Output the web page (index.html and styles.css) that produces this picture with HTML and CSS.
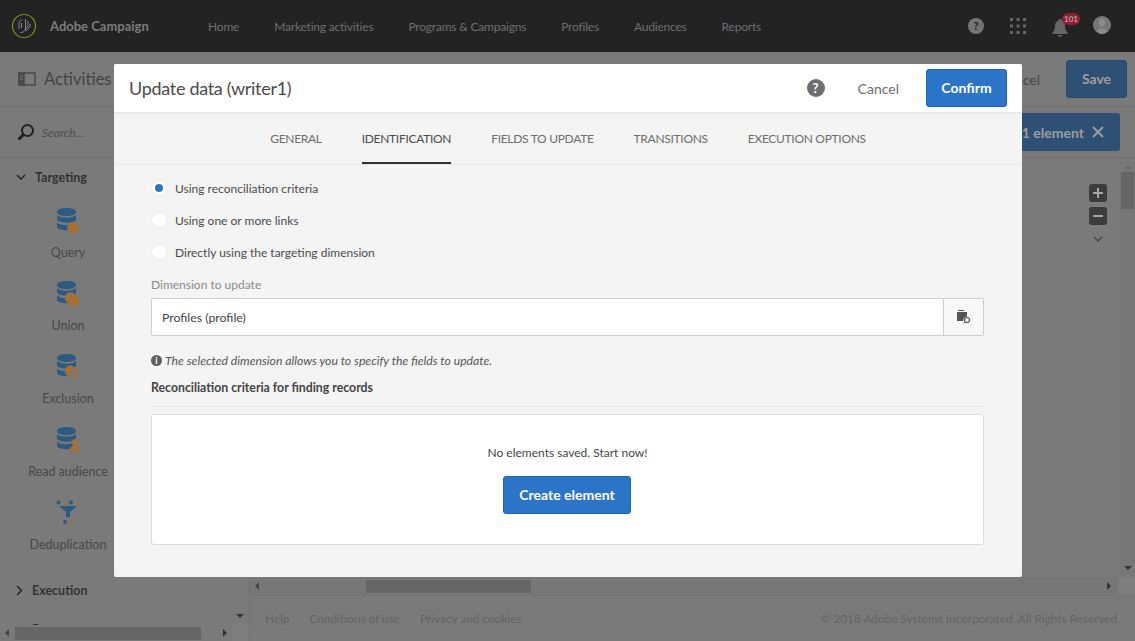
FILE: index.html
```html
<!DOCTYPE html>
<html lang="en">

<head>
    <meta charset="UTF-8">
    <title>Adobe Campaign</title>
    <link rel="stylesheet" href="styles.css">
</head>

<body>
    <!-- Top navigation -->
    <header class="topbar">
        <svg class="logo" width="26" height="26" viewBox="0 0 26 26" fill="none">
            <circle cx="13" cy="13" r="11.500" stroke="#7c8a2a" stroke-width="1.200" />
            <path d="M8 16V10c0-1.500 1-3 3-3M10.500 15v-5M14.500 6v10c0 2-2 3.500-5 3.500M17 8v5l-3 3.500M19 11v2.500l-4 4.500" stroke="#8a8a8a" stroke-width="1" />
        </svg>
        <span class="brand">Adobe Campaign</span>
        <nav class="topnav">
            <a>Home</a>
            <a>Marketing activities</a>
            <a>Programs &amp; Campaigns</a>
            <a>Profiles</a>
            <a>Audiences</a>
            <a>Reports</a>
        </nav>
        <div class="topicons">
            <span class="help-dim">?</span>
            <svg width="16" height="16" viewBox="0 0 16 16" fill="#666">
                <rect x="0" y="0" width="3" height="3" /><rect x="6.500" y="0" width="3" height="3" /><rect x="13" y="0" width="3" height="3" />
                <rect x="0" y="6.500" width="3" height="3" /><rect x="6.500" y="6.500" width="3" height="3" /><rect x="13" y="6.500" width="3" height="3" />
                <rect x="0" y="13" width="3" height="3" /><rect x="6.500" y="13" width="3" height="3" /><rect x="13" y="13" width="3" height="3" />
            </svg>
            <div class="bell">
                <svg width="16" height="18" viewBox="0 0 16 18" fill="#666">
                    <path d="M8 0c1 0 1.500.6 1.500 1.500C12 2.300 13 4.500 13 7c0 3.500 1 5 2.500 6.500V15H.5v-1.500C2 12 3 10.500 3 7c0-2.500 1-4.700 3.500-5.500C6.500.6 7 0 8 0zM6 16h4c0 1.200-1 2-2 2s-2-.8-2-2z" />
                </svg>
                <span class="badge">101</span>
            </div>
            <svg class="avatar" width="18" height="18" viewBox="0 0 18 18">
                <circle cx="9" cy="9" r="9" fill="#777" />
                <path d="M9 3c2 0 3 1.500 3 3.500S10.500 11 9 11 6 8.500 6 6.500 7 3 9 3zM4 16c.5-3 3-3.500 5-3.500s4.500.5 5 3.500c-1.500 1.300-3 2-5 2s-3.500-.7-5-2z" fill="#8c8c8c" />
            </svg>
        </div>
    </header>

    <!-- Activities toolbar, mostly behind the dialog -->
    <div class="toolbar">
        <svg width="18" height="14" viewBox="0 0 18 14" fill="none" stroke="#4a4a4a" stroke-width="1.500">
            <rect x="1" y="1" width="16" height="12" />
            <rect x="1" y="1" width="5" height="12" fill="#4a4a4a" />
            <path d="M2 4h3M2 7h3" stroke="#7a7a7a" stroke-width="1" />
        </svg>
        <span class="toolbar-title">Activities</span>
        <span class="toolbar-cancel">Cancel</span>
        <button class="btn-save">Save</button>
    </div>

    <div class="workspace">
        <!-- Activity palette -->
        <aside class="sidebar">
            <div class="search">
                <svg width="18" height="18" viewBox="0 0 18 18" fill="none" stroke="#222" stroke-width="2">
                    <circle cx="10.500" cy="7.500" r="5.500" />
                    <path d="M6.500 11.500L1.500 16.500" stroke-width="3" />
                </svg>
                <span>Search...</span>
            </div>
            <div class="palette">
                <div class="group-title">
                    <svg width="10" height="7" viewBox="0 0 10 7" fill="none" stroke="#2c2c2c" stroke-width="1.600"><path d="M1 1l4 4 4-4" /></svg>
                    Targeting
                </div>
                <div class="activity">
                    <svg width="24" height="26" viewBox="0 0 24 26">
                        <defs>
                            <path id="db-shape" d="M1 4c0-5.300 19-5.300 19 0s-19 5.300-19 0zM1 7c3 3.500 16 3.500 19 0v5c-3 3.500-16 3.500-19 0zM1 14.500c3 3.500 16 3.500 19 0v5c-3 3.500-16 3.500-19 0z" />
                        </defs>
                        <use class="db" href="#db-shape" />
                        <circle class="or" cx="17" cy="20" r="5.500" />
                    </svg>
                    <span>Query</span>
                </div>
                <div class="activity">
                    <svg width="24" height="26" viewBox="0 0 24 26">
                        <use class="db" href="#db-shape" />
                        <circle class="or" cx="14.500" cy="17" r="5.500" />
                        <circle class="or" cx="18" cy="20" r="5.500" />
                    </svg>
                    <span>Union</span>
                </div>
                <div class="activity">
                    <svg width="24" height="26" viewBox="0 0 24 26">
                        <use class="db" href="#db-shape" />
                        <circle class="or" cx="14.500" cy="17" r="5.500" />
                        <circle cx="18" cy="20" r="4.300" fill="#7a7a7a" stroke="#a86f2f" stroke-width="1.200" />
                    </svg>
                    <span>Exclusion</span>
                </div>
                <div class="activity">
                    <svg width="24" height="26" viewBox="0 0 24 26">
                        <use class="db" href="#db-shape" />
                        <path class="or" d="M19 12c2 0 3 1.500 3 3s-1 2.500-1.500 3.500c1 1 3.500 1 3.500 3.500v2H14v-2c0-2.500 2.500-2.500 3.500-3.500-.5-1-1.500-2-1.500-3.500s1-3 3-3z" />
                    </svg>
                    <span>Read audience</span>
                </div>
                <div class="activity">
                    <svg width="26" height="26" viewBox="0 0 26 26">
                        <circle class="db" cx="3.500" cy="2.500" r="2" />
                        <path class="or" d="M9.500 .5l2 4h-4z" />
                        <circle class="db" cx="16" cy="2.500" r="2" />
                        <path class="or" d="M23 .5l2 4h-4z" />
                        <path class="db" d="M4 6h18l-7 6v5h-4v-5z" />
                        <circle class="db" cx="10" cy="22" r="2" />
                        <path class="or" d="M16 20l2 4h-4z" />
                    </svg>
                    <span>Deduplication</span>
                </div>
                <div class="group-title group-closed">
                    <svg width="7" height="11" viewBox="0 0 7 11" fill="none" stroke="#2c2c2c" stroke-width="1.600"><path d="M1 1l4.500 4.500L1 10" /></svg>
                    Execution
                </div>
                <div class="group-title group-cut">
                    <svg width="7" height="11" viewBox="0 0 7 11" fill="none" stroke="#2c2c2c" stroke-width="1.600"><path d="M1 1l4.500 4.500L1 10" /></svg>
                    Data management
                </div>
                <span class="arrow-down sidebar-down"></span>
            </div>
            <div class="hscroll sidebar-scroll">
                <span class="arrow-left"></span>
                <span class="thumb"></span>
                <span class="arrow-right"></span>
                <span class="corner"></span>
            </div>
        </aside>

        <!-- Workflow canvas -->
        <main class="main">
            <div class="selection-row">
                <div class="selection">1 element
                    <svg width="12" height="12" viewBox="0 0 12 12" stroke="#9a9a9a" stroke-width="2"><path d="M1 1l10 10M11 1L1 11" /></svg>
                </div>
            </div>
            <div class="canvas">
                <div class="zoom-tools">
                    <span class="zoom-btn">
                        <svg width="12" height="12" viewBox="0 0 12 12" stroke="#a5a5a5" stroke-width="2"><path d="M1 6h10M6 1v10" /></svg>
                    </span>
                    <span class="zoom-btn">
                        <svg width="12" height="12" viewBox="0 0 12 12" stroke="#a5a5a5" stroke-width="2"><path d="M1 6h10" /></svg>
                    </span>
                    <svg class="zoom-more" width="10" height="6" viewBox="0 0 10 6" fill="none" stroke="#444" stroke-width="1.200"><path d="M1 1l4 4 4-4" /></svg>
                </div>
                <div class="vscroll">
                    <span class="arrow-up"></span>
                    <span class="vthumb"></span>
                    <span class="arrow-down"></span>
                </div>
            </div>
            <div class="hscroll main-scroll">
                <span class="arrow-left"></span>
                <span class="thumb"></span>
                <span class="arrow-right"></span>
                <span class="corner"></span>
            </div>
            <footer class="footer">
                <a>Help</a>
                <a>Conditions of use</a>
                <a>Privacy and cookies</a>
                <span class="copyright">© 2018 Adobe Systems Incorporated. All Rights Reserved.</span>
            </footer>
        </main>
    </div>

    <!-- Update data dialog -->
    <div class="modal">
        <div class="modal-head">
            <h1>Update data (writer1)</h1>
            <span class="help">?</span>
            <a class="cancel">Cancel</a>
            <button class="btn-primary btn-confirm">Confirm</button>
        </div>
        <div class="tabs">
            <a>GENERAL</a>
            <a class="active">IDENTIFICATION</a>
            <a>FIELDS TO UPDATE</a>
            <a>TRANSITIONS</a>
            <a>EXECUTION OPTIONS</a>
        </div>
        <div class="modal-body">
            <label class="radio"><span class="dot checked"></span>Using reconciliation criteria</label>
            <label class="radio"><span class="dot"></span>Using one or more links</label>
            <label class="radio"><span class="dot"></span>Directly using the targeting dimension</label>

            <div class="field-label">Dimension to update</div>
            <div class="field">
                <span class="field-value">Profiles (profile)</span>
                <span class="field-btn">
                    <svg width="14" height="14" viewBox="0 0 14 14">
                        <path d="M1 0h6v1H1zM0 2h10v4.500A4 4 0 0 0 6.200 11H0z" fill="#555" />
                        <circle cx="10" cy="10" r="2.500" fill="none" stroke="#555" stroke-width="1.200" />
                        <path d="M8 12l-1.500 1.500" stroke="#555" />
                    </svg>
                </span>
            </div>

            <p class="hint">
                <span class="hint-icon">i</span>
                <em>The selected dimension allows you to specify the fields to update.</em>
            </p>

            <div class="section-title">Reconciliation criteria for finding records</div>
            <div class="empty-box">
                <p>No elements saved. Start now!</p>
                <button class="btn-primary btn-create">Create element</button>
            </div>
        </div>
    </div>
</body>

</html>
```

FILE: styles.css
```css
* {
    box-sizing: border-box;
}

html,
body {
    height: 100%;
}

body {
    margin: 0;
    height: 641px;
    overflow: hidden;
    display: flex;
    flex-direction: column;
    font-family: Lato, "Open Sans", Arial, sans-serif;
    font-size: 12px;
    color: #444;
    background-color: #7a7a7a;
}

/* Top navigation */
.topbar {
    height: 52px;
    flex: none;
    display: flex;
    align-items: center;
    padding-left: 11px;
    background-color: #232323;
    color: #6e6e6e;
}

.logo {
    flex: none;
}

.brand {
    margin-left: 13px;
    width: 158px;
    font-weight: 700;
    font-size: 13px;
    color: #7b7b7b;
}

.topnav {
    display: flex;
    gap: 35px;
    letter-spacing: -0.200px;
}

.topicons {
    margin-left: auto;
    padding-right: 24px;
    display: flex;
    align-items: center;
    gap: 26px;
}

.help-dim {
    width: 16px;
    height: 16px;
    border-radius: 50%;
    background-color: #747474;
    color: #232323;
    font-weight: 700;
    font-size: 12px;
    line-height: 16px;
    text-align: center;
}

.bell {
    position: relative;
    display: flex;
    margin-top: 3px;
}

.badge {
    position: absolute;
    left: 10px;
    top: -6px;
    width: 18px;
    height: 12px;
    border-radius: 6px;
    background-color: #8f1f33;
    color: #b5a0a5;
    font-size: 8px;
    font-weight: 700;
    line-height: 12px;
    text-align: center;
}

.avatar {
    margin-left: -1px;
    margin-top: -2px;
}

/* Toolbar */
.toolbar {
    height: 55px;
    flex: none;
    display: flex;
    align-items: center;
    padding: 0 8px 0 18px;
    border-bottom: 1px solid #6f6f6f;
}

.toolbar-title {
    margin-left: 8px;
    font-size: 16.500px;
    color: #444;
}

.toolbar-cancel {
    margin-left: auto;
    margin-right: 26px;
    font-size: 14px;
}

.btn-save {
    width: 61px;
    height: 38px;
    padding: 0 0 2px;
    border: 1px solid #294a70;
    border-radius: 3px;
    background-color: #2f5075;
    color: #9d9d9d;
    font-family: inherit;
    font-size: 14px;
    font-weight: 700;
}

.workspace {
    flex: 1;
    min-height: 0;
    display: flex;
}

/* Sidebar */
.sidebar {
    width: 250px;
    flex: none;
    display: flex;
    flex-direction: column;
    border-right: 1px solid #727272;
}

.search {
    height: 51px;
    flex: none;
    display: flex;
    align-items: center;
    gap: 7px;
    padding-left: 17px;
    border-bottom: 1px solid #6f6f6f;
    font-style: italic;
    font-size: 12px;
    color: #4f4f4f;
}

.palette {
    position: relative;
    flex: 1;
    min-height: 0;
    overflow: hidden;
}

.group-title {
    display: flex;
    align-items: center;
    gap: 9px;
    height: 20px;
    margin-top: 9px;
    padding-left: 16px;
    font-size: 12.500px;
    font-weight: 700;
    color: #333;
}

.group-closed {
    margin-top: 28px;
}

.group-cut {
    margin-top: 19px;
}

.activity {
    width: 136px;
    height: 73px;
    display: flex;
    flex-direction: column;
    align-items: center;
    gap: 11px;
    padding-top: 21px;
    font-size: 12.500px;
    color: #484848;
}

.activity svg {
    flex: none;
}

.db {
    fill: #2c5a80;
}

.or {
    fill: #a86f2f;
    stroke: #7a7a7a;
    stroke-width: 0.500;
}

.arrow-down,
.arrow-up,
.arrow-left,
.arrow-right {
    width: 0;
    height: 0;
    border: 4px solid transparent;
}

.arrow-down {
    border-top-color: #333;
    border-bottom-width: 0;
}

.arrow-up {
    border-bottom-color: #6a6a6a;
    border-top-width: 0;
}

.arrow-left {
    border-right-color: #444;
    border-left-width: 0;
}

.arrow-right {
    border-left-color: #333;
    border-right-width: 0;
}

.sidebar-down {
    position: absolute;
    right: 5px;
    bottom: 7px;
}

.hscroll {
    flex: none;
    display: flex;
    align-items: center;
}

.thumb {
    height: 13px;
    background-color: #666;
}

.corner {
    align-self: stretch;
    background-color: #7e7e7e;
}

.sidebar-scroll {
    height: 16px;
    padding-left: 5px;
}

.sidebar-scroll .thumb {
    width: 186px;
    margin-left: 6px;
}

.sidebar-scroll .arrow-right {
    margin-left: 22px;
}

.sidebar-scroll .corner {
    width: 17px;
    margin-left: auto;
}

/* Canvas */
.main {
    flex: 1;
    min-width: 0;
    display: flex;
    flex-direction: column;
}

.selection-row {
    height: 51px;
    flex: none;
    display: flex;
    justify-content: flex-end;
    align-items: center;
    padding-right: 15px;
    border-bottom: 1px solid #6f6f6f;
}

.selection {
    height: 38px;
    width: 120px;
    display: flex;
    align-items: center;
    justify-content: flex-end;
    gap: 8px;
    padding-right: 16px;
    border-radius: 3px;
    background-color: #2f5075;
    color: #9d9d9d;
    font-size: 14px;
    font-weight: 700;
}

.canvas {
    flex: 1;
    min-height: 0;
    display: flex;
    justify-content: flex-end;
    position: relative;
}

.zoom-tools {
    position: absolute;
    top: 26px;
    right: 28px;
    display: flex;
    flex-direction: column;
    align-items: center;
    gap: 5px;
}

.zoom-btn {
    width: 18px;
    height: 18px;
    display: flex;
    align-items: center;
    justify-content: center;
    border-radius: 3px;
    background-color: #3c3c3c;
}

.zoom-more {
    margin-top: 6px;
}

.vscroll {
    width: 15px;
    display: flex;
    flex-direction: column;
    align-items: center;
    padding: 7px 0;
    background-color: #777;
}

.vthumb {
    width: 13px;
    height: 37px;
    margin-top: 3px;
    background-color: #666;
}

.vscroll .arrow-down {
    margin-top: auto;
}

.main-scroll {
    height: 19px;
    padding-left: 5px;
    border-bottom: 1px solid #747474;
    background-color: #777;
}

.main-scroll .thumb {
    width: 165px;
    margin-left: 107px;
}

.main-scroll .arrow-right {
    margin-left: 576px;
}

.main-scroll .corner {
    width: 17px;
    margin-left: auto;
}

.footer {
    height: 45px;
    flex: none;
    display: flex;
    align-items: center;
    gap: 20px;
    padding: 0 15px 0 15px;
    font-size: 11.800px;
    color: #636363;
}

.copyright {
    margin-left: auto;
}

/* Dialog */
.modal {
    position: absolute;
    left: 114px;
    top: 64px;
    width: 908px;
    height: 513px;
    display: flex;
    flex-direction: column;
    border-radius: 2px;
    background-color: #f4f4f4;
}

.modal-head {
    height: 50px;
    flex: none;
    display: flex;
    align-items: center;
    padding: 0 15px;
    border-bottom: 2px solid #e9e9e9;
    background-color: #fff;
    border-radius: 2px 2px 0 0;
}

.modal-head h1 {
    margin: 0 auto 0 0;
    font-size: 18px;
    font-weight: 400;
    letter-spacing: -0.300px;
    color: #4b4b4b;
}

.help {
    width: 18px;
    height: 18px;
    border-radius: 50%;
    background-color: #6e6e6e;
    color: #fff;
    font-weight: 700;
    font-size: 13px;
    line-height: 18px;
    text-align: center;
}

.cancel {
    margin-left: 33px;
    margin-right: 27px;
    font-size: 14px;
    color: #6e6e6e;
}

.btn-primary {
    height: 38px;
    padding: 0 0 2px;
    border: 1px solid #1a66ba;
    border-radius: 3px;
    background-color: #2c74c8;
    color: #fff;
    font-family: inherit;
    font-size: 14px;
    font-weight: 700;
}

.btn-confirm {
    width: 81px;
}

.tabs {
    height: 51px;
    flex: none;
    display: flex;
    justify-content: center;
    gap: 40px;
    border-bottom: 1px solid #e8e8e8;
    letter-spacing: -0.300px;
    color: #6e6e6e;
}

.tabs a {
    height: 50px;
    line-height: 50px;
}

.tabs a.active {
    color: #4b4b4b;
    border-bottom: 2px solid #333;
}

.modal-body {
    flex: 1;
    padding: 7px 38px 0 37px;
}

.radio {
    height: 32px;
    display: flex;
    align-items: center;
    gap: 8px;
    color: #4b4b4b;
}

.dot {
    width: 16px;
    height: 16px;
    border: 1px solid #ebebeb;
    border-radius: 50%;
    background-color: #fff;
    display: flex;
    align-items: center;
    justify-content: center;
}

.dot.checked::after {
    content: "";
    width: 8px;
    height: 8px;
    border-radius: 50%;
    background-color: #2c74c8;
}

.field-label {
    margin-top: 8px;
    height: 18px;
    line-height: 18px;
    color: #8b8b8b;
}

.field {
    margin-top: 4px;
    height: 38px;
    display: flex;
    border: 1px solid #cfcfcf;
    border-radius: 2px;
    background-color: #fff;
}

.field-value {
    flex: 1;
    padding-left: 10px;
    line-height: 37px;
    font-size: 12.300px;
}

.field-btn {
    width: 40px;
    display: flex;
    align-items: center;
    justify-content: center;
    border-left: 1px solid #cfcfcf;
    background-color: #f8f8f8;
}

.hint {
    margin: 16px 0 0;
    height: 16px;
    display: flex;
    align-items: center;
    gap: 3px;
    font-size: 12.200px;
    color: #555;
}

.hint-icon {
    width: 11px;
    height: 11px;
    border-radius: 50%;
    background-color: #5e5e5e;
    color: #fff;
    font-size: 9px;
    font-weight: 700;
    line-height: 11px;
    text-align: center;
}

.section-title {
    margin-top: 10px;
    height: 29px;
    padding-top: 2px;
    border-bottom: 1px solid #e6e6e6;
    font-size: 12.300px;
    font-weight: 700;
    color: #444;
}

.empty-box {
    margin-top: 7px;
    height: 131px;
    display: flex;
    flex-direction: column;
    align-items: center;
    border: 1px solid #dcdcdc;
    border-radius: 3px;
    background-color: #fff;
}

.empty-box p {
    margin: 29px 0 14px;
    line-height: 18px;
}

.btn-create {
    width: 128px;
    margin-right: 1px;
}
```
